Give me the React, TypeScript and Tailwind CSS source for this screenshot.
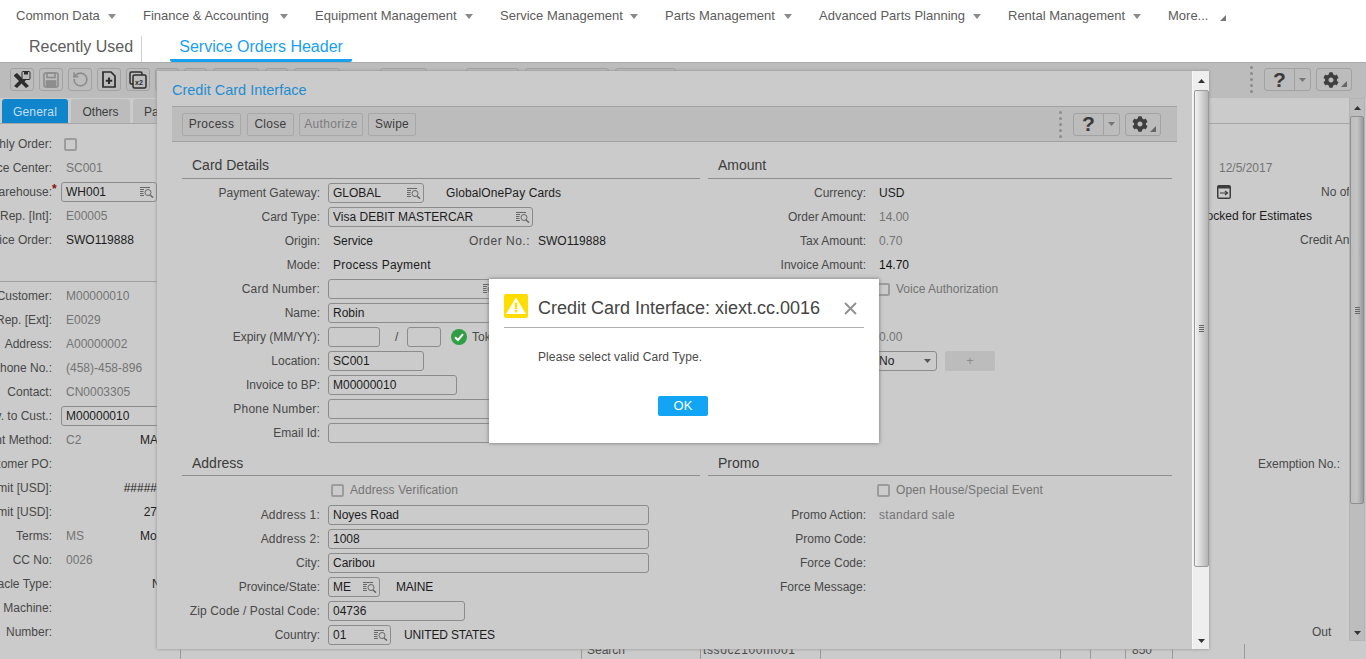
import React from "react";
import { FaCog } from "react-icons/fa";
import { RotateCcw } from "lucide-react";

const Caret = () => (
  <svg width="8" height="5" viewBox="0 0 8 5" className="shrink-0">
    <polygon points="0,0 8,0 4,5" fill="#8a8a8a" />
  </svg>
);

const Corner = ({ color = "#666" }: { color?: string }) => (
  <svg width="6" height="6" viewBox="0 0 6 6" className="shrink-0">
    <polygon points="6,0 6,6 0,6" fill={color} />
  </svg>
);

const Lookup = () => (
  <svg width="14" height="12" viewBox="0 0 14 12" className="shrink-0">
    <g stroke="#666" strokeWidth="1" fill="none">
      <path d="M0 1.5H10M0 3.5H4M0 5.5H3.5M0 7.5H3.5M0 9.5H4" />
      <circle cx="8" cy="6.5" r="3" />
      <path d="M10 9L13 11.5" strokeWidth="1.6" />
    </g>
  </svg>
);

const Box = ({ w, children }: { w: number | string; children?: React.ReactNode }) => (
  <div
    className="h-[20px] shrink-0 border border-[#8c8c8c] rounded-[3px] pl-[4px] pr-[2px] flex items-center justify-between text-[#1c1c1c] overflow-hidden"
    style={{ width: w }}
  >
    {children}
  </div>
);

const Check = () => <div className="w-[13px] h-[13px] shrink-0 border-2 border-[#9c9c9c] rounded-[2px]" />;

const NAV: [string, number][] = [
  ["Common Data", 83],
  ["Finance & Accounting", 128],
  ["Equipment Management", 141],
  ["Service Management", 121],
  ["Parts Management", 110],
  ["Advanced Parts Planning", 145],
  ["Rental Management", 116],
];

const ToolBtn = ({ children }: { children?: React.ReactNode }) => (
  <div className="w-[24px] h-[23px] border border-[#a2a2a2] rounded-[3px] flex items-center justify-center shrink-0">
    {children}
  </div>
);

const HIDDEN_TOOLS: [number, number][] = [
  [24, 5],
  [23, 5],
  [46, 6],
  [23, 6],
  [46, 6],
  [47, 40],
  [53, 39],
  [84, 6],
  [61, 6],
];

const HelpGroup = () => (
  <div className="flex items-center">
    <div className="flex flex-col gap-[3px] mr-[11px]">
      {[0, 1, 2, 3, 4].map((i) => (
        <div key={i} className="w-[3px] h-[3px] rounded-full bg-[#8c8c8c]" />
      ))}
    </div>
    <div className="w-[47px] h-[23px] border border-[#a2a2a2] rounded-[3px] flex shrink-0">
      <div className="w-[30px] border-r border-[#a2a2a2] flex items-center justify-center text-[21px] font-bold text-[#3a3a3a]">?</div>
      <div className="flex-1 flex items-center justify-center">
        <svg width="7" height="4" viewBox="0 0 7 4"><polygon points="0,0 7,0 3.5,4" fill="#777" /></svg>
      </div>
    </div>
    <div className="w-[36px] h-[23px] ml-[5px] border border-[#a2a2a2] rounded-[3px] flex items-center pl-[6px] shrink-0 relative">
      <FaCog size={16} color="#3f3f3f" />
      <div className="ml-[2px] mt-[9px]"><Corner /></div>
    </div>
  </div>
);

const BgRow = ({ label, value, tone = "grey", extra }: { label?: string; value?: React.ReactNode; tone?: "grey" | "dark"; extra?: React.ReactNode }) => (
  <div className="h-[24px] flex items-center whitespace-nowrap w-[157px]">
    <div className="w-[52px] shrink-0 flex justify-end overflow-hidden text-[#484848]">{label}</div>
    <div className={`pl-[14px] flex-1 flex items-center justify-between ${tone === "grey" ? "text-[#747474]" : "text-[#1c1c1c]"}`}>
      <span>{value}</span>
      {extra}
    </div>
  </div>
);

const Field = ({ label, children, className = "" }: { label: string; children?: React.ReactNode; className?: string }) => (
  <div className="h-[24px] flex items-center whitespace-nowrap">
    <div className={`w-[138px] shrink-0 text-right text-[#484848] ${className}`}>{label}</div>
    <div className="ml-[8px] flex items-center flex-1">{children}</div>
  </div>
);

const RField = ({ label, children }: { label?: string; children?: React.ReactNode }) => (
  <div className="h-[24px] flex items-center whitespace-nowrap">
    <div className="w-[158px] shrink-0 text-right text-[#484848]">{label}</div>
    <div className="ml-[13px] flex items-center flex-1">{children}</div>
  </div>
);

const Arrow = ({ up, color = "#333" }: { up?: boolean; color?: string }) => (
  <svg width="7" height="4" viewBox="0 0 7 4">
    <polygon points={up ? "0,4 7,4 3.5,0" : "0,0 7,0 3.5,4"} fill={color} />
  </svg>
);

const Grip = () => (
  <div className="flex flex-col gap-px">
    <div className="w-[5px] h-px bg-[#666]" />
    <div className="w-[5px] h-px bg-[#666]" />
    <div className="w-[5px] h-px bg-[#666]" />
    <div className="w-[5px] h-px bg-[#666]" />
  </div>
);

const ActionBtn = ({ children, dis, w }: { children: string; dis?: boolean; w: string }) => (
  <div className={`h-[23px] border border-[#a8a8a8] rounded-[2px] flex items-center justify-center tracking-[0.3px] ${w} ${dis ? "text-[#7c7c7c]" : "text-[#3c3c3c]"}`}>
    {children}
  </div>
);

export default function App() {
  return (
    <div className="relative w-[1366px] h-[659px] overflow-hidden bg-white text-[12px] font-['Liberation_Sans',Arial,sans-serif]">
      {/* top menu */}
      <div className="h-[32px] flex items-center pl-[16px] text-[13px] text-[#5c5c5c] whitespace-nowrap">
        {NAV.map(([n, w]) => (
          <div key={n} className="flex items-center mr-[27px]">
            <span style={{ width: w }}>{n}</span>
            <span className="ml-[9px]"><Caret /></span>
          </div>
        ))}
        <span className="w-[41px]">More...</span>
        <span className="ml-[11px] mt-[3px]"><Corner color="#777" /></span>
      </div>

      {/* tabs */}
      <div className="h-[30px] flex text-[16px] whitespace-nowrap">
        <div className="pl-[29px] pr-[8px] h-[26px] mt-[4px] leading-[22px] text-[#5c5c5c] border-r border-[#cfcfcf]">Recently Used</div>
        <div className="ml-[28px] w-[182px] text-center leading-[30px] text-[#18a0f0] border-b-[3px] border-[#18a0f0] rounded-b-[2px]">Service Orders Header</div>
      </div>

      {/* dimmed page */}
      <div className="h-[597px] bg-[#cbcbcb] overflow-hidden">
        <div className="h-[36px] bg-[#bcbcbc] border-t border-[#aaaaaa] pt-[5px] pl-[10px] pr-[14px] flex items-start">
          <div className="flex gap-[5px]">
            <ToolBtn>
              <svg width="18" height="18" viewBox="0 0 18 18">
                <path d="M1 4L4 2L9 7L13 3L16 6L11.5 10.5L16 15L13 17L8.5 12.5L4 17L1 15L6 10L1 5Z" fill="#2c2c2c" />
                <rect x="9" y="0.5" width="8" height="8" rx="1" fill="#bcbcbc" stroke="#2c2c2c" />
                <rect x="11" y="1" width="4" height="2.5" fill="#2c2c2c" />
              </svg>
            </ToolBtn>
            <ToolBtn>
              <svg width="16" height="16" viewBox="0 0 16 16" fill="none" stroke="#8d8d8d" strokeWidth="1.6">
                <rect x="1" y="1" width="14" height="14" rx="1.5" />
                <rect x="4" y="1" width="8" height="4.5" />
                <rect x="3.5" y="9" width="9" height="6" fill="#8d8d8d" />
              </svg>
            </ToolBtn>
            <ToolBtn><RotateCcw size={17} color="#8d8d8d" strokeWidth={2.4} /></ToolBtn>
            <ToolBtn>
              <svg width="14" height="17" viewBox="0 0 14 17" fill="none" stroke="#2c2c2c" strokeWidth="1.7">
                <path d="M1 1H9L13 5V16H1Z" />
                <path d="M7 6.5V13M3.8 9.7H10.2" strokeWidth="2" />
              </svg>
            </ToolBtn>
            <ToolBtn>
              <svg width="18" height="18" viewBox="0 0 18 18" fill="none" stroke="#2c2c2c" strokeWidth="1.5">
                <rect x="1" y="1" width="12" height="12" rx="1.5" />
                <rect x="4" y="4" width="13" height="13" rx="1.5" fill="#bcbcbc" />
                <text x="6" y="14" fontSize="7" fontWeight="bold" fill="#2c2c2c" stroke="none">x2</text>
              </svg>
            </ToolBtn>
          </div>
          {HIDDEN_TOOLS.map(([w, m], i) => (
            <div key={i} className="h-[23px] border border-[#a2a2a2] rounded-[3px] shrink-0" style={{ width: w, marginLeft: m }} />
          ))}
          <div className="ml-auto -mt-[2px]"><HelpGroup /></div>
        </div>

        <div className="flex h-[561px]">
          {/* left form */}
          <div className="w-[157px] shrink-0">
            <div className="h-[26px] pt-[1px] border-b border-[#a6a6a6] flex pl-[2px] gap-[3px] whitespace-nowrap w-[157px] overflow-hidden">
              <div className="w-[66px] shrink-0 h-[25px] rounded-t-[3px] bg-[#0f86cc] text-[#c4dff0] flex items-center justify-center tracking-[0.2px]">General</div>
              <div className="w-[59px] shrink-0 h-[25px] rounded-t-[3px] bg-[#bcbcbc] text-[#3c3c3c] flex items-center justify-center">Others</div>
              <div className="w-[60px] shrink-0 h-[25px] rounded-t-[3px] bg-[#bcbcbc] text-[#3c3c3c] pl-[11px] flex items-center">Parts</div>
            </div>
            <div className="pt-[8px]">
              <BgRow label="Monthly Order:" value={<span className="block -ml-[2px]"><Check /></span>} />
              <BgRow label="Service Center:" value="SC001" />
              <div className="h-[24px] flex items-center whitespace-nowrap">
                <div className="w-[52px] shrink-0 flex justify-end overflow-hidden text-[#484848] relative">Warehouse:</div>
                <span className="w-[9px] self-start mt-[2px] text-[#8a1010] font-bold leading-[14px]">*</span>
                <Box w={96}><span>WH001</span><Lookup /></Box>
              </div>
              <BgRow label="Rep. [Int]:" value="E00005" />
              <BgRow label="Service Order:" value="SWO119888" tone="dark" />
              <div className="mt-[29px] mb-[2px] h-px w-[157px] bg-[#a0a0a0]" />
              <BgRow label="Customer:" value="M00000010" />
              <BgRow label="Rep. [Ext]:" value="E0029" />
              <BgRow label="Address:" value="A00000002" />
              <BgRow label="Phone No.:" value="(458)-458-896" />
              <BgRow label="Contact:" value="CN0003305" />
              <div className="h-[24px] flex items-center whitespace-nowrap">
                <div className="w-[52px] shrink-0 flex justify-end overflow-hidden text-[#484848]">Inv. to Cust.:</div>
                <div className="ml-[9px]"><Box w={110}>M00000010</Box></div>
              </div>
              <BgRow label="Payment Method:" value="C2" extra={<span className="text-[#1c1c1c] w-[17px] overflow-hidden">MA</span>} />
              <BgRow label="Customer PO:" />
              <BgRow label="Limit [USD]:" extra={<span className="text-[#1c1c1c]">#####</span>} />
              <BgRow label="Limit [USD]:" extra={<span className="text-[#1c1c1c]">27</span>} />
              <BgRow label="Terms:" value="MS" extra={<span className="text-[#1c1c1c] w-[17px] overflow-hidden">Mo</span>} />
              <BgRow label="CC No:" value="0026" />
              <BgRow label="Obstacle Type:" extra={<span className="text-[#1c1c1c] w-[5px] overflow-hidden">N</span>} />
              <BgRow label="Machine:" />
              <BgRow label="Number:" />
            </div>
          </div>

          {/* centre, mostly under the dialog */}
          <div className="flex-1 flex flex-col justify-end">
            <div className="ml-[23px] mb-[-2px] h-[24px] grid grid-cols-[401px_119px_120px_240px_30px_35px_48px] border-t border-[#a0a0a0] text-[#484848]">
              <div className="border-l border-[#9a9a9a]" />
              <div className="border-l border-[#9a9a9a] pl-[5px] leading-[24px]">Search</div>
              <div className="border-l border-[#9a9a9a] pl-[2px] leading-[24px] tracking-[0.6px]">tssoc2100m001</div>
              <div className="border-l border-[#9a9a9a]" />
              <div className="border-l border-[#9a9a9a]" />
              <div className="border-l border-[#9a9a9a]" />
              <div className="border-l border-r border-[#9a9a9a] text-right pr-[20px] leading-[24px]">850</div>
            </div>
          </div>

          {/* right form */}
          <div className="w-[141px] shrink-0 whitespace-nowrap overflow-hidden text-[#484848]">
            <div className="h-[26px] border-b border-[#a6a6a6]" />
            <div className="pt-[8px]">
              <div className="h-[24px]" />
              <div className="h-[24px] leading-[24px] pl-[11px] text-[#747474]">12/5/2017</div>
              <div className="h-[24px] flex items-center pl-[9px]">
                <svg width="14" height="14" viewBox="0 0 14 14" className="shrink-0">
                  <rect x="0" y="0" width="14" height="14" rx="2" fill="#3c3c3c" />
                  <rect x="1.5" y="3.5" width="11" height="9" fill="#cbcbcb" />
                  <path d="M3 8H10M8 6L10.5 8L8 10" stroke="#3c3c3c" strokeWidth="1.2" fill="none" />
                </svg>
                <span className="ml-[90px]">No of</span>
              </div>
              <div className="h-[24px] flex justify-end items-center pr-[37px] text-[#1c1c1c] overflow-hidden">Locked for Estimates</div>
              <div className="h-[24px] leading-[24px] pl-[92px]">Credit Analysis</div>
              <div className="h-[200px]" />
              <div className="h-[24px] leading-[24px] text-right pr-[9px]">Exemption No.:</div>
              <div className="h-[144px]" />
              <div className="h-[24px] leading-[24px] pl-[104px]">Out</div>
              <div className="ml-[36px] h-[16px] border-l border-[#9a9a9a]" />
            </div>
          </div>

          {/* page scrollbar */}
          <div className="w-[16px] h-[543px] shrink-0 bg-[#bdbdbd] border border-[#b4b4b4] flex flex-col items-center">
            <div className="h-[17px] flex items-center"><Arrow up /></div>
            <div className="w-[14px] h-[388px] rounded-[2px] border border-[#8f8f8f] bg-gradient-to-r from-[#bdbdbd] via-[#c4c4c4] to-[#9b9b9b] flex items-center justify-center"><Grip /></div>
            <div className="mt-auto h-[14px] flex items-center"><Arrow /></div>
          </div>
          <div className="w-[1px]" />
        </div>
      </div>

      {/* Credit Card Interface window */}
      <div className="absolute left-[157px] top-[71px] w-[1052px] h-[578px] bg-[#cbcbcb] shadow-[0_0_3px_#8f8f8f] flex">
        <div className="flex-1 min-w-0 overflow-hidden whitespace-nowrap">
          <div className="pt-[9px] pl-[15px] h-[29px] text-[14.5px] leading-[20px] text-[#1f8dd2]">Credit Card Interface</div>
          <div className="mt-[6px] mx-[15px] h-[36px] bg-[#bcbcbc] border-y border-[#a2a2a2] pl-[10px] pr-[16px] flex items-center">
            <ActionBtn w="w-[59px]">Process</ActionBtn>
            <div className="ml-[6px]"><ActionBtn w="w-[47px]">Close</ActionBtn></div>
            <div className="ml-[5px]"><ActionBtn w="w-[64px]" dis>Authorize</ActionBtn></div>
            <div className="ml-[5px]"><ActionBtn w="w-[48px]">Swipe</ActionBtn></div>
            <div className="ml-auto"><HelpGroup /></div>
          </div>

          <div className="pl-[25px] grid grid-cols-[518px_464px] gap-x-[8px] text-[#1c1c1c]">
            <div>
              <div className="mt-[12px] h-[25px] border-b border-[#8e8e8e] pl-[10px] text-[14px] leading-[22px] text-[#3c3c3c]">Card Details</div>
              <div className="mt-[2px]">
                <Field label="Payment Gateway:">
                  <Box w={96}><span>GLOBAL</span><Lookup /></Box>
                  <span className="ml-[22px] tracking-[0.1px]">GlobalOnePay Cards</span>
                </Field>
                <Field label="Card Type:">
                  <Box w={205}><span>Visa DEBIT MASTERCAR</span><Lookup /></Box>
                </Field>
                <Field label="Origin:">
                  <span className="ml-[5px] w-[136px]">Service</span>
                  <span className="w-[61px] text-right text-[#484848] tracking-[0.5px]">Order No.:</span>
                  <span className="ml-[8px]">SWO119888</span>
                </Field>
                <Field label="Mode:"><span className="ml-[5px] tracking-[0.25px]">Process Payment</span></Field>
                <Field label="Card Number:" className="tracking-[0.25px]"><Box w={172}><span /><Lookup /></Box></Field>
                <Field label="Name:"><Box w={321}>Robin</Box></Field>
                <Field label="Expiry (MM/YY):">
                  <Box w={52} />
                  <span className="ml-[15px] w-[12px] text-[#484848]">/</span>
                  <Box w={34} />
                  <svg width="16" height="16" viewBox="0 0 16 16" className="ml-[10px] shrink-0">
                    <circle cx="8" cy="8" r="8" fill="#2f9e44" />
                    <path d="M4 8.2L7 11L12 5.2" stroke="#fff" strokeWidth="2" fill="none" />
                  </svg>
                  <span className="ml-[5px] text-[#484848]">Tokenize</span>
                </Field>
                <Field label="Location:"><Box w={96}>SC001</Box></Field>
                <Field label="Invoice to BP:"><Box w={129}>M00000010</Box></Field>
                <Field label="Phone Number:" className="tracking-[0.2px]"><Box w={321} /></Field>
                <Field label="Email Id:"><Box w={321} /></Field>
              </div>
            </div>
            <div>
              <div className="mt-[12px] h-[25px] border-b border-[#8e8e8e] pl-[10px] text-[14px] leading-[22px] text-[#3c3c3c]">Amount</div>
              <div className="mt-[2px]">
                <RField label="Currency:">USD</RField>
                <RField label="Order Amount:"><span className="text-[#747474]">14.00</span></RField>
                <RField label="Tax Amount:"><span className="text-[#747474]">0.70</span></RField>
                <RField label="Invoice Amount:"><span className="text-[#111]">14.70</span></RField>
                <RField>
                  <div className="-ml-[2px]"><Check /></div>
                  <span className="ml-[6px] text-[#747474]">Voice Authorization</span>
                </RField>
                <RField />
                <RField label="Surcharge:"><span className="text-[#747474]">0.00</span></RField>
                <RField>
                  <div className="-ml-[5px] w-[63px] h-[20px] border border-[#8c8c8c] rounded-[3px] pl-[4px] pr-[5px] flex items-center justify-between shrink-0">
                    <span>No</span><Arrow color="#555" />
                  </div>
                  <div className="ml-[8px] w-[50px] h-[20px] bg-[#bcbcbc] rounded-[2px] flex items-center justify-center text-[#8a8a8a] shrink-0">+</div>
                </RField>
              </div>
            </div>

            <div>
              <div className="mt-[7px] h-[24px] border-b border-[#8e8e8e] pl-[10px] text-[14px] leading-[22px] text-[#3c3c3c]">Address</div>
              <div className="mt-[2px]">
                <div className="h-[25px] pb-px flex items-center whitespace-nowrap pl-[149px]">
                  <Check />
                  <span className="ml-[6px] text-[#747474] tracking-[0.1px]">Address Verification</span>
                </div>
                <Field label="Address 1:" className="tracking-[0.2px]"><Box w={321}>Noyes Road</Box></Field>
                <Field label="Address 2:" className="tracking-[0.2px]"><Box w={321}>1008</Box></Field>
                <Field label="City:"><Box w={321}>Caribou</Box></Field>
                <Field label="Province/State:">
                  <Box w={52}><span>ME</span><Lookup /></Box>
                  <span className="ml-[16px] -tracking-[0.2px]">MAINE</span>
                </Field>
                <Field label="Zip Code / Postal Code:" className="tracking-[0.12px]"><Box w={137}>04736</Box></Field>
                <Field label="Country:">
                  <Box w={63}><span>01</span><Lookup /></Box>
                  <span className="ml-[13px] -tracking-[0.15px]">UNITED STATES</span>
                </Field>
              </div>
            </div>
            <div>
              <div className="mt-[7px] h-[24px] border-b border-[#8e8e8e] pl-[10px] text-[14px] leading-[22px] text-[#3c3c3c]">Promo</div>
              <div className="mt-[2px]">
                <div className="h-[25px] pb-px flex items-center whitespace-nowrap pl-[169px]">
                  <Check />
                  <span className="ml-[6px] text-[#747474] tracking-[0.12px]">Open House/Special Event</span>
                </div>
                <RField label="Promo Action:"><span className="text-[#747474] tracking-[0.3px]">standard sale</span></RField>
                <RField label="Promo Code:" />
                <RField label="Force Code:" />
                <RField label="Force Message:" />
              </div>
            </div>
          </div>
        </div>

        {/* window scrollbar */}
        <div className="w-[17px] shrink-0 bg-[#eeeeee] border-l border-[#f8f8f8] flex flex-col items-center">
          <div className="h-[19px] flex items-center"><Arrow up /></div>
          <div className="w-[15px] h-[477px] rounded-[2px] border border-[#9a9a9a] bg-gradient-to-r from-[#f2f2f2] via-[#d4d4d4] to-[#b4b4b4] flex items-center justify-center"><Grip /></div>
          <div className="mt-auto h-[16px] flex items-center"><Arrow /></div>
        </div>
      </div>

      {/* alert dialog */}
      <div className="absolute left-[489px] top-[279px] w-[390px] h-[164px] bg-white shadow-[0_0_4px_#6f6f6f] px-[15px] whitespace-nowrap">
        <div className="h-[49px] pt-[15px] border-b border-[#b0b0b0] flex items-start">
          <svg width="24" height="24" viewBox="0 0 24 24" className="shrink-0">
            <rect width="24" height="24" rx="2" fill="#ffdd00" />
            <polygon points="12,3.5 22,20 2,20" fill="#fff" />
            <rect x="10.8" y="8.5" width="2.4" height="6.5" fill="#ffdd00" />
            <rect x="10.8" y="16" width="2.4" height="2.4" fill="#ffdd00" />
          </svg>
          <span className="ml-[10px] mt-[4px] text-[18px] leading-[20px] text-[#444]">Credit Card Interface: xiext.cc.0016</span>
          <svg width="13" height="13" viewBox="0 0 13 13" className="ml-[24px] mt-[8px] shrink-0">
            <path d="M1 1L12 12M12 1L1 12" stroke="#8f8f8f" strokeWidth="1.8" />
          </svg>
        </div>
        <div className="mt-[21px] ml-[34px] text-[#4a4a4a] leading-[16px] tracking-[0.1px]">Please select valid Card Type.</div>
        <div className="mt-[31px] flex justify-center">
          <div className="w-[50px] h-[20px] ml-[-2px] bg-[#12a5f5] rounded-[2px] text-white text-[13px] flex items-center justify-center">OK</div>
        </div>
      </div>
    </div>
  );
}
